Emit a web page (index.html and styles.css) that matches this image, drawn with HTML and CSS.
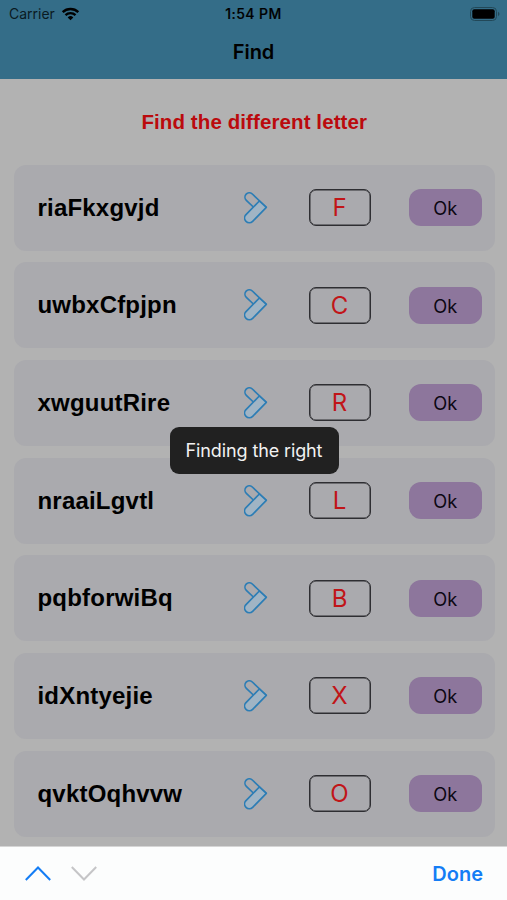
FILE: index.html
```html
<!DOCTYPE html>
<html lang="en">
<head>
<meta charset="utf-8">
<title>Find</title>
<link rel="stylesheet" href="styles.css">
</head>
<body>
<svg class="defs" aria-hidden="true">
  <symbol id="arrow" viewBox="12 12 72 96">
    <path class="arm" d="M40 57 19 37A12.5 12.5 0 0 1 37 18L79 58"/>
    <path class="arm filled" d="M58 39 79 58 38 100A13.5 13.5 0 0 1 18 80Z"/>
  </symbol>
</svg>
<header class="top">
  <div class="status">
    <div class="carrier"><span>Carrier</span>
      <svg class="wifi" viewBox="0 0 18 14"><path d="M1.2 5.1a11.3 11.3 0 0 1 15.6 0M4 8.1a7.2 7.2 0 0 1 10 0"/><path class="dot" d="M9 13.3 6.2 10.4a4 4 0 0 1 5.6 0Z"/></svg>
    </div>
    <div class="time">1:54 PM</div>
    <svg class="battery" viewBox="0 0 30 14"><rect class="shell" x=".5" y=".5" width="26" height="13" rx="4"/><rect x="2.3" y="2.3" width="22.4" height="9.4" rx="2"/><path class="cap" d="M28 4.8q3 2.2 0 4.4z"/></svg>
  </div>
  <h1>Find</h1>
</header>
<main>
  <h2>Find the different letter</h2>
  <div class="list">
    <div class="card"><span class="word">riaFkxgvjd</span><svg class="arrow"><use href="#arrow"/></svg><span class="field">F</span><button>Ok</button></div>
    <div class="card"><span class="word">uwbxCfpjpn</span><svg class="arrow"><use href="#arrow"/></svg><span class="field">C</span><button>Ok</button></div>
    <div class="card"><span class="word">xwguutRire</span><svg class="arrow"><use href="#arrow"/></svg><span class="field">R</span><button>Ok</button></div>
    <div class="card"><span class="word">nraaiLgvtl</span><svg class="arrow"><use href="#arrow"/></svg><span class="field">L</span><button>Ok</button></div>
    <div class="card"><span class="word">pqbforwiBq</span><svg class="arrow"><use href="#arrow"/></svg><span class="field">B</span><button>Ok</button></div>
    <div class="card"><span class="word">idXntyejie</span><svg class="arrow"><use href="#arrow"/></svg><span class="field">X</span><button>Ok</button></div>
    <div class="card"><span class="word">qvktOqhvvw</span><svg class="arrow"><use href="#arrow"/></svg><span class="field">O</span><button>Ok</button></div>
  </div>
</main>
<footer class="toolbar">
  <svg class="nav" viewBox="0 0 26 15"><path d="M.8 14 13 1.5 25.2 14"/></svg>
  <svg class="nav off" viewBox="0 0 26 15"><path d="M.8 1 13 13.5 25.2 1"/></svg>
  <span class="done">Done</span>
</footer>
<div class="toast">Finding the right</div>
</body>
</html>
```
FILE: styles.css
```css
* { box-sizing: border-box; }
body {
  margin: 0;
  width: 507px;
  height: 900px;
  overflow: hidden;
  position: relative;
  display: flex;
  flex-direction: column;
  background: #b2b2b2;
  color: #000;
  font-family: Inter, "Liberation Sans", sans-serif;
}
.defs { position: absolute; width: 0; height: 0; }
.top { flex: none; height: 79px; background: #346d88; }
.status {
  height: 27px;
  padding: 0 7px 0 9px;
  display: grid;
  grid-template-columns: 1fr auto 1fr;
  align-items: center;
  font-size: 14px;
}
.carrier { display: flex; align-items: center; gap: 6px; color: #0a1a22; }
.wifi { width: 19px; height: 14px; fill: none; stroke: #000; stroke-width: 2.4; }
.wifi .dot { fill: #000; stroke: none; }
.time { font-weight: 500; font-size: 14px; letter-spacing: .45px; margin-right: 2px; -webkit-text-stroke: .2px #000; }
.battery { width: 30px; height: 14px; justify-self: end; }
.battery .shell { fill: none; stroke: #224858; }
.battery .cap { fill: #224858; }
h1 { margin: 0; text-align: center; font-size: 20px; line-height: 51px; font-weight: 600; }
main { flex: 1; min-height: 0; padding: 0 12px 0 13.5px; overflow: hidden; }
h2 {
  margin: 0;
  padding-top: 22px;
  height: 85.5px;
  text-align: center;
  font: bold 20.5px/42px "Liberation Sans", Arial, sans-serif;
  letter-spacing: .1px;
  color: #bb0a0d;
}
.list { display: flex; flex-direction: column; gap: 11.7px; }
.card {
  flex: none;
  height: 86px;
  padding: 0 12.5px 0 24px;
  border-radius: 12px;
  background: #aaaaae;
  display: grid;
  grid-template-columns: 206px 65px 100px 73.5px;
  align-items: center;
}
.word { font: bold 24px/30px "Liberation Sans", Arial, sans-serif; letter-spacing: .2px; }
.arrow { width: 24px; height: 32px; }
.arm { fill: none; stroke: #2c7db5; stroke-width: 5; stroke-linejoin: round; }
.filled { fill: #a0b4c4; }
.field {
  width: 62px;
  height: 37px;
  border: 1px solid #2e2e32;
  box-shadow: inset 0 0 0 .5px #2e2e32;
  border-radius: 7px;
  text-align: center;
  font-size: 24px;
  line-height: 36px;
  color: #c11518;
}
button {
  height: 37px;
  padding: 0;
  border: 0;
  border-radius: 12px;
  background: #8d769c;
  color: #0c0712;
  font: 18.3px/38px Inter, sans-serif;
}
.toolbar {
  flex: none;
  height: 54px;
  padding: 0 24px 0 25px;
  display: flex;
  align-items: center;
  gap: 20px;
  background: #fcfdfd;
  border-top: 1px solid #d5d5d5;
}
.nav { width: 26px; height: 15px; fill: none; stroke: #147df5; stroke-width: 2; }
.nav.off { stroke: #c5c5c7; }
.done { margin-left: auto; color: #147df5; font-size: 20px; font-weight: 600; }
.toast {
  position: absolute;
  left: 169.5px;
  top: 427px;
  width: 169px;
  height: 47px;
  border-radius: 9px;
  background: #212121;
  color: #f2f2f2;
  text-align: center;
  font-size: 18px;
  letter-spacing: -.12px;
  line-height: 48px;
}
```
